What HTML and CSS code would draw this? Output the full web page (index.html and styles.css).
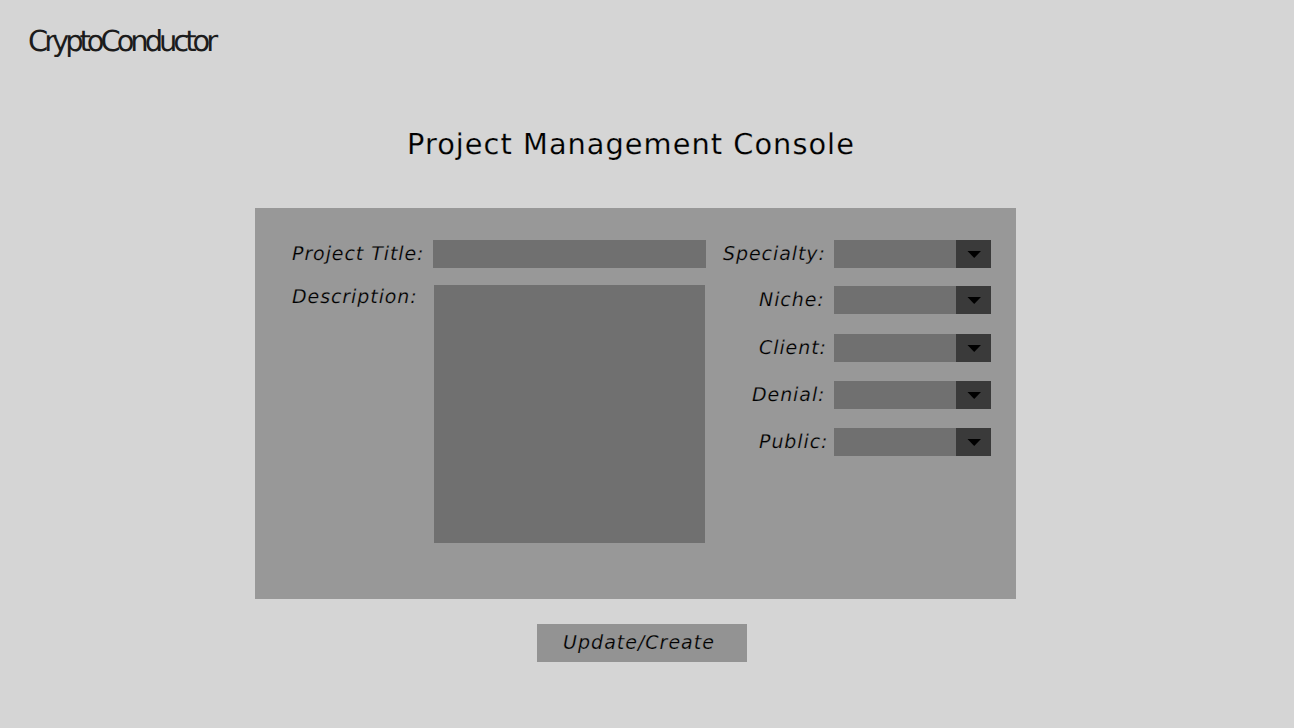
FILE: index.html
```html
<!DOCTYPE html>
<html lang="en">
<head>
<meta charset="utf-8">
<title>Project Management Console</title>
<link rel="stylesheet" href="styles.css">
</head>
<body>
<header class="brand"><span class="word">CryptoConductor</span></header>
<main>
<h1 class="title"><span>Project Management Console</span></h1>
<form class="panel">
<div class="left">
<label class="label label-title" for="title">Project Title:</label>
<input class="field" id="title">
<label class="label label-desc" for="desc">Description:</label>
<textarea class="field area" id="desc"></textarea>
</div>
<div class="right">
<div class="row specialty"><span class="label">Specialty:</span><button type="button" class="select" aria-label="Specialty"><svg class="arrow" viewBox="0 0 14 7"><path d="M0.5 0H14L7.2 7Z"/></svg></button></div>
<div class="row niche"><span class="label">Niche:</span><button type="button" class="select" aria-label="Niche"><svg class="arrow" viewBox="0 0 14 7"><path d="M0.5 0H14L7.2 7Z"/></svg></button></div>
<div class="row client"><span class="label">Client:</span><button type="button" class="select" aria-label="Client"><svg class="arrow" viewBox="0 0 14 7"><path d="M0.5 0H14L7.2 7Z"/></svg></button></div>
<div class="row denial"><span class="label">Denial:</span><button type="button" class="select" aria-label="Denial"><svg class="arrow" viewBox="0 0 14 7"><path d="M0.5 0H14L7.2 7Z"/></svg></button></div>
<div class="row public"><span class="label">Public:</span><button type="button" class="select" aria-label="Public"><svg class="arrow" viewBox="0 0 14 7"><path d="M0.5 0H14L7.2 7Z"/></svg></button></div>
</div>
</form>
<button type="button" class="submit">Update/Create</button>
</main>
</body>
</html>
```
FILE: styles.css
```css
* { box-sizing: border-box; }
body { margin: 0; height: 728px; overflow: hidden; background: #d5d5d5; color: #000; font-family: "DejaVu Sans", sans-serif; text-rendering: geometricPrecision; }
.brand { height: 120px; padding: 24px 0 0 28px; font: 29px/34px "DejaVu Sans", sans-serif; letter-spacing: -4.06px; color: #1c1c1c; }
.title { margin: 0; height: 88px; padding: 6px 0 0 407px; font-size: 28.8px; font-weight: 400; line-height: 36px; letter-spacing: 1.04px; white-space: nowrap; -webkit-text-stroke: 0.2px #d5d5d5; }
.panel { width: 761px; height: 391px; margin-left: 255px; padding: 32px 25px 0 37px; background: #989898; display: flex; justify-content: space-between; }
.left { display: grid; grid-template-columns: 141px 273px; grid-template-rows: 28px 258px; row-gap: 17px; align-content: start; }
.label { font-size: 19px; font-style: italic; line-height: 28px; letter-spacing: 0.92px; white-space: nowrap; -webkit-text-stroke: 0.25px #989898; }
.label-desc { margin-top: -2px; }
.field { display: block; width: 273px; height: 28px; margin: 0; padding: 0 8px; border: 0; border-radius: 0; background: #707070; font: inherit; resize: none; outline: 0; }
.area { width: 271px; height: 258px; margin-left: 1px; }
.right { display: flex; flex-direction: column; }
.row { display: grid; grid-template-columns: 111px 157px; height: 28px; margin-bottom: 19px; }
.specialty { margin-bottom: 18px; }
.niche { margin-bottom: 20px; }
.niche .label, .client .label, .public .label { padding-left: 36px; }
.denial .label { padding-left: 29px; }
.select { height: 28px; padding: 0 10px 0 0; border: 0; background: linear-gradient(to right, #707070 122px, #3a3a3a 122px); display: flex; align-items: center; justify-content: flex-end; }
.arrow { width: 14px; height: 7px; }
.submit { display: block; width: 210px; height: 38px; margin: 25px 0 0 537px; padding: 0 6px 2px 0; border: 0; background: #939393; color: #000; font: italic 19px/26px "DejaVu Sans", sans-serif; letter-spacing: 1px; -webkit-text-stroke: 0.25px #939393; }
```
